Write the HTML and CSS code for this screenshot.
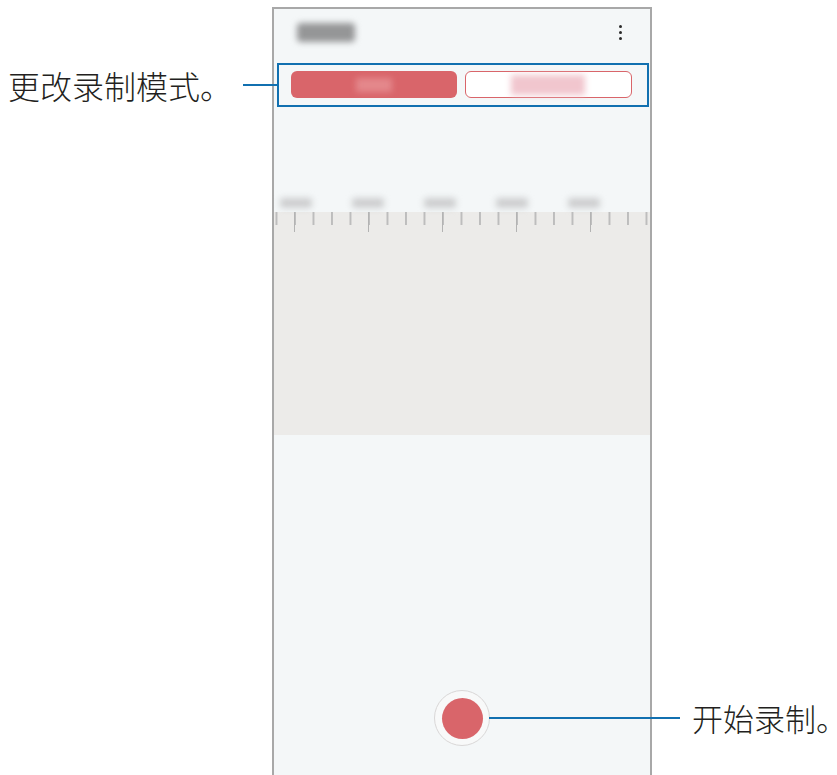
FILE: index.html
```html
<!DOCTYPE html>
<html lang="zh">
<head>
    <meta charset="utf-8">
    <title>录音机</title>
    <link rel="stylesheet" href="styles.css">
</head>
<body>

    <div class="stage">

        <div class="side">
            <div class="note note-left">
                <span class="note-text">更改录制模式。</span>
                <span class="note-line"></span>
            </div>
        </div>

        <div class="phone">

            <div class="header">
                <span class="title blur"></span>
                <span class="more">
                    <i></i><i></i><i></i>
                </span>
            </div>

            <div class="modes">
                <div class="mode mode-on"><span class="mode-label blur"></span></div>
                <div class="mode mode-off"><span class="mode-label blur"></span></div>
            </div>

            <div class="ruler">
                <div class="marks">
                    <span class="blur"></span>
                    <span class="blur"></span>
                    <span class="blur"></span>
                    <span class="blur"></span>
                    <span class="blur"></span>
                </div>
                <div class="wave">
                    <div class="ticks"></div>
                </div>
            </div>

            <div class="controls">
                <div class="record">
                    <span class="record-dot"></span>
                    <div class="note note-right">
                        <span class="note-line"></span>
                        <span class="note-text">开始录制。</span>
                    </div>
                </div>
            </div>

        </div>

    </div>

</body>
</html>
```

FILE: styles.css
```css
html, body {
    margin: 0;
    overflow: hidden;
    background: #fff;
}
body {
    width: 837px;
    height: 775px;
    font-family: "Noto Sans CJK SC", "Noto Sans", sans-serif;
    color: #231f20;
}
.stage {
    display: flex;
    padding-top: 7px;
}
.side {
    width: 272px;
    flex-shrink: 0;
}
/* callouts */
.note {
    display: flex;
    align-items: center;
    white-space: nowrap;
}
.note-text {
    font-size: 32px;
    line-height: 32px;
    font-weight: 300;
}
.note-line {
    height: 2px;
    background: #1170b0;
}
.note-left {
    margin-top: 62px;
    padding-left: 8px;
    gap: 11px;
}
.note-left .note-line {
    flex: 1;
    margin-right: -5px;
    position: relative;
    z-index: 1;
}
.note-right {
    position: absolute;
    left: 100%;
    top: 50%;
    transform: translateY(-50%);
    gap: 12px;
}
.note-right .note-line {
    width: 191px;
}
.note-right .note-text {
    font-size: 31px;
}
/* phone */
.phone {
    width: 380px;
    height: 790px;
    box-sizing: border-box;
    border: 2px solid #a8a8a8;
    background: #f4f7f8;
    display: flex;
    flex-direction: column;
}
.blur {
    display: block;
    filter: blur(3px);
}
.header {
    height: 54px;
    box-sizing: border-box;
    display: flex;
    align-items: center;
    justify-content: space-between;
    padding: 0 28px 8px 23px;
}
.title {
    width: 58px;
    height: 19px;
    border-radius: 4px;
    background: #959697;
}
.more {
    display: flex;
    flex-direction: column;
    gap: 2.5px;
    margin-top: 1px;
}
.more i {
    width: 3.5px;
    height: 3.5px;
    border-radius: 50%;
    background: #2a2a2a;
}
.modes {
    height: 44px;
    box-sizing: border-box;
    margin: 0 1px 0 3px;
    border: 2px solid #1170b0;
    display: flex;
    gap: 8px;
    padding: 6px 15px 0 12px;
}
.mode {
    flex: 1;
    height: 27px;
    box-sizing: border-box;
    border-radius: 6px;
    display: flex;
    align-items: center;
    justify-content: center;
}
.mode-on {
    background: #d9656a;
}
.mode-on .mode-label {
    width: 36px;
    height: 14px;
    background: #e4888c;
}
.mode-off {
    background: #fff;
    border: 1.5px solid #d9656a;
}
.mode-off .mode-label {
    width: 74px;
    height: 20px;
    background: #f1c6ce;
}
/* ruler */
.ruler {
    margin-top: 88px;
}
.marks {
    display: flex;
    gap: 40px;
    padding: 3px 0 0 6px;
    height: 14px;
}
.marks span {
    width: 32px;
    height: 10px;
    border-radius: 3px;
    background: #cdcecf;
}
.wave {
    height: 223px;
    background: #ecebe9;
}
.ticks {
    height: 20px;
    background:
        linear-gradient(to right, #b3b3b3 1.5px, transparent 1.5px) 20px 0 / 74px 20px repeat-x,
        linear-gradient(to right, #bdbdbd 1.5px, transparent 1.5px) 20px 0 / 18.5px 13px repeat-x;
}
/* record */
.controls {
    display: flex;
    justify-content: center;
    padding-top: 255px;
}
.record {
    position: relative;
    width: 56px;
    height: 56px;
    box-sizing: border-box;
    border-radius: 50%;
    border: 1px solid #d9d7d7;
    background: #f8f9f9;
    display: flex;
    align-items: center;
    justify-content: center;
}
.record-dot {
    width: 41px;
    height: 41px;
    border-radius: 50%;
    background: #d9656a;
}
```
